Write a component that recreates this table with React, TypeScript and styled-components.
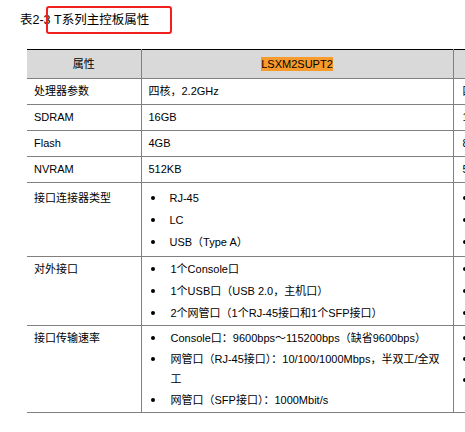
import React from "react";
import styled, { createGlobalStyle } from "styled-components";

const Global = createGlobalStyle`
  html, body { margin: 0; padding: 0; background: #fff; }
  body {
    width: 465px;
    height: 432px;
    overflow: hidden;
    font-family: "Liberation Sans", Arial, "Noto Sans CJK SC", sans-serif;
    color: #000;
  }
`;

const Page = styled.div`
  position: relative;
  width: 465px;
  height: 432px;
  overflow: hidden;
`;

const Caption = styled.div`
  padding: 10px 0 0 20px;
  height: 49px;
  box-sizing: border-box;
  font-size: 12.5px;
  line-height: 20px;
  white-space: nowrap;
`;

const Highlight = styled.div`
  position: absolute;
  left: 46px;
  top: 6px;
  width: 126px;
  height: 28px;
  box-sizing: border-box;
  border: 2px solid #f21f1f;
  border-radius: 3px;
`;

const TableWrap = styled.div`
  padding-left: 27px;
`;

const Table = styled.table`
  border-collapse: collapse;
  table-layout: fixed;
  width: 640px;
  font-size: 11px;
  border-top: 1px solid #000;
  border-bottom: 1px solid #000;
`;

const Col = styled.col<{ $w: number }>`
  width: ${(p) => p.$w}px;
`;

const Th = styled.th`
  background: #d9d9d9;
  font-weight: normal;
  text-align: center;
  padding: 3px 7px;
  line-height: 22px;
  border-left: 1px solid #808080;
  border-right: 1px solid #808080;
  border-bottom: 1px solid #808080;
  white-space: nowrap;
  overflow: hidden;
  &:first-child { border-left: none; }
`;

const Mark = styled.span`
  background: #f99a2c;
  padding: 1px 0;
`;

const Td = styled.td<{ $pt?: number; $pb?: number; $pl?: number }>`
  vertical-align: ${(p) => (p.$pt !== undefined ? "top" : "middle")};
  text-align: left;
  padding: ${(p) => p.$pt ?? 3}px 4px ${(p) => p.$pb ?? 3}px ${(p) => p.$pl ?? 7}px;
  line-height: 19px;
  border: 1px solid #808080;
  white-space: normal;
  overflow: hidden;
  &:first-child { border-left: none; }
`;

const Label = styled.div`
  line-height: 20px;
`;

const List = styled.ul<{ $gap?: number }>`
  list-style: none;
  margin: 0;
  padding: 0;
  display: flex;
  flex-direction: column;
  gap: ${(p) => p.$gap ?? 2}px;
`;

const Item = styled.li<{ $indent?: number }>`
  position: relative;
  padding-left: ${(p) => p.$indent ?? 22}px;
  line-height: 20px;
  &::before {
    content: "";
    position: absolute;
    left: 2px;
    top: 8px;
    width: 4px;
    height: 4px;
    border-radius: 50%;
    background: #000;
  }
`;

type Row =
  | { kind: "text"; label: string; a: string; b: string }
  | {
      kind: "list";
      label: string;
      a: string[];
      b: string[];
      pt: number;
      pb: number;
      gap: number;
      indent: number;
    };

const rows: Row[] = [
  { kind: "text", label: "处理器参数", a: "四核，2.2GHz", b: "四核，2.2GHz" },
  { kind: "text", label: "SDRAM", a: "16GB", b: "16GB" },
  { kind: "text", label: "Flash", a: "4GB", b: "8GB" },
  { kind: "text", label: "NVRAM", a: "512KB", b: "512KB" },
  {
    kind: "list",
    label: "接口连接器类型",
    a: ["RJ-45", "LC", "USB（Type A）"],
    b: ["RJ-45", "LC", "USB（Type A）"],
    pt: 5,
    pb: 4,
    gap: 2,
    indent: 21,
  },
  {
    kind: "list",
    label: "对外接口",
    a: ["1个Console口", "1个USB口（USB 2.0，主机口）", "2个网管口（1个RJ-45接口和1个SFP接口）"],
    b: ["1个Console口", "1个USB口", "2个网管口"],
    pt: 2,
    pb: 2,
    gap: 2,
    indent: 22,
  },
  {
    kind: "list",
    label: "接口传输速率",
    a: [
      "Console口：9600bps～115200bps（缺省9600bps）",
      "网管口（RJ-45接口）：10/100/1000Mbps，半双工/全双工",
      "网管口（SFP接口）：1000Mbit/s",
    ],
    b: ["Console口", "网管口", "网管口"],
    pt: 2,
    pb: 2,
    gap: 1,
    indent: 22,
  },
];

export default function App() {
  return (
    <Page>
      <Global />
      <Caption>表2-3 T系列主控板属性</Caption>
      <Highlight />
      <TableWrap>
        <Table>
          <colgroup>
            <Col $w={114} />
            <Col $w={312} />
            <Col $w={214} />
          </colgroup>
          <thead>
            <tr>
              <Th>属性</Th>
              <Th>
                <Mark>LSXM2SUPT2</Mark>
              </Th>
              <Th>LSXM2SUPT3</Th>
            </tr>
          </thead>
          <tbody>
            {rows.map((r) =>
              r.kind === "text" ? (
                <tr key={r.label}>
                  <Td>{r.label}</Td>
                  <Td>{r.a}</Td>
                  <Td $pl={9}>{r.b}</Td>
                </tr>
              ) : (
                <tr key={r.label}>
                  <Td $pt={r.pt} $pb={r.pb}>
                    <Label>{r.label}</Label>
                  </Td>
                  <Td $pt={r.pt} $pb={r.pb}>
                    <List $gap={r.gap}>
                      {r.a.map((t) => (
                        <Item key={t} $indent={r.indent}>
                          {t}
                        </Item>
                      ))}
                    </List>
                  </Td>
                  <Td $pt={r.pt} $pb={r.pb} $pl={7}>
                    <List $gap={r.gap}>
                      {r.b.map((t, i) => (
                        <Item key={t + i} $indent={r.indent}>
                          {t}
                        </Item>
                      ))}
                    </List>
                  </Td>
                </tr>
              )
            )}
          </tbody>
        </Table>
      </TableWrap>
    </Page>
  );
}
